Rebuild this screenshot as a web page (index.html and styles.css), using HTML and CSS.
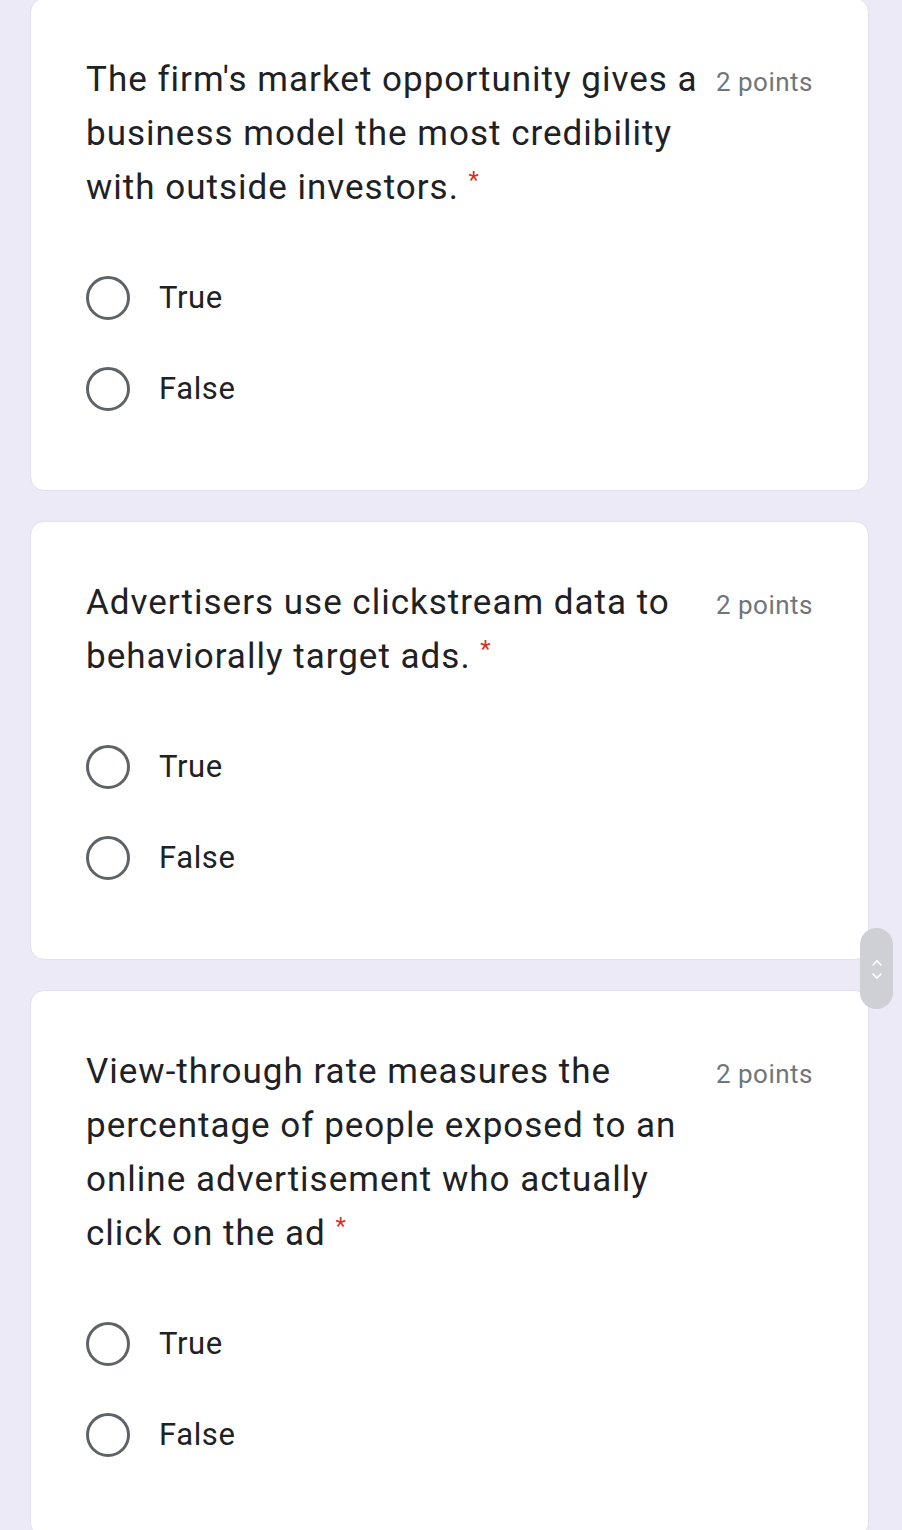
FILE: index.html
```html
<!DOCTYPE html>
<html lang="en">
<head>
  <meta charset="UTF-8">
  <meta name="viewport" content="width=device-width, initial-scale=1.0">
  <title>Quiz</title>
  <link rel="stylesheet" href="styles.css">
</head>
<body>
  <div class="form">
    <div class="question">
      <div class="question-head">
        <div class="question-title">The firm's market opportunity gives a business model the most credibility with outside investors.&nbsp;<span class="required">*</span></div>
        <div class="question-points">2 points</div>
      </div>
      <div class="options">
        <label class="option"><span class="radio"></span><span class="option-label">True</span></label>
        <label class="option"><span class="radio"></span><span class="option-label">False</span></label>
      </div>
    </div>

    <div class="question">
      <div class="question-head">
        <div class="question-title">Advertisers use clickstream data to behaviorally target ads.&nbsp;<span class="required">*</span></div>
        <div class="question-points">2 points</div>
      </div>
      <div class="options">
        <label class="option"><span class="radio"></span><span class="option-label">True</span></label>
        <label class="option"><span class="radio"></span><span class="option-label">False</span></label>
      </div>
    </div>

    <div class="question">
      <div class="question-head">
        <div class="question-title">View-through rate measures the percentage of people exposed to an online advertisement who actually click on the ad&nbsp;<span class="required">*</span></div>
        <div class="question-points">2 points</div>
      </div>
      <div class="options">
        <label class="option"><span class="radio"></span><span class="option-label">True</span></label>
        <label class="option"><span class="radio"></span><span class="option-label">False</span></label>
      </div>
    </div>
  </div>

  <div class="scroll-handle">
    <svg width="14" height="40" viewBox="0 0 14 40">
      <path d="M3 16 L7 12 L11 16" fill="none" stroke="#ffffff" stroke-width="1.6" stroke-linecap="round"/>
      <path d="M3 25 L7 29 L11 25" fill="none" stroke="#ffffff" stroke-width="1.6" stroke-linecap="round"/>
    </svg>
  </div>
</body>
</html>
```

FILE: styles.css
```css
* {
  margin: 0;
  padding: 0;
  box-sizing: border-box;
}

body {
  font-family: Roboto, 'Noto Sans', sans-serif;
  background: #ebeaf6;
  color: #202124;
  overflow: hidden;
}

.form {
  margin-top: -2px;
  padding: 0 33px 0 30px;
}

.question {
  background: #ffffff;
  border: 1px solid #e2e1ec;
  border-radius: 14px;
  padding: 54px 55px 56px 55px;
  margin-bottom: 30px;
}

.question-head {
  display: flex;
  align-items: baseline;
  gap: 16px;
}

.question-title {
  flex: 1;
  font-size: 35px;
  letter-spacing: 1px;
  line-height: 54px;
  max-width: 618px;
}

.required {
  color: #d93025;
  font-size: 24px;
  line-height: 1;
  vertical-align: 0.45em;
  letter-spacing: 0;
}

.question-points {
  margin-left: auto;
  flex-shrink: 0;
  font-size: 26px;
  letter-spacing: 0.5px;
  color: #70757a;
}

.options {
  margin-top: 37px;
  display: flex;
  flex-direction: column;
}

.option {
  display: flex;
  align-items: center;
  height: 91px;
  gap: 29px;
}

.radio {
  width: 44px;
  height: 44px;
  border: 3.5px solid #5f6368;
  border-radius: 50%;
  flex-shrink: 0;
}

.option-label {
  font-size: 31px;
  letter-spacing: 0.6px;
  color: #202124;
}

.scroll-handle {
  position: fixed;
  left: 860px;
  top: 928px;
  width: 33px;
  height: 81px;
  border-radius: 17px;
  background: #cfcfd6;
  display: flex;
  align-items: center;
  justify-content: center;
}
```
